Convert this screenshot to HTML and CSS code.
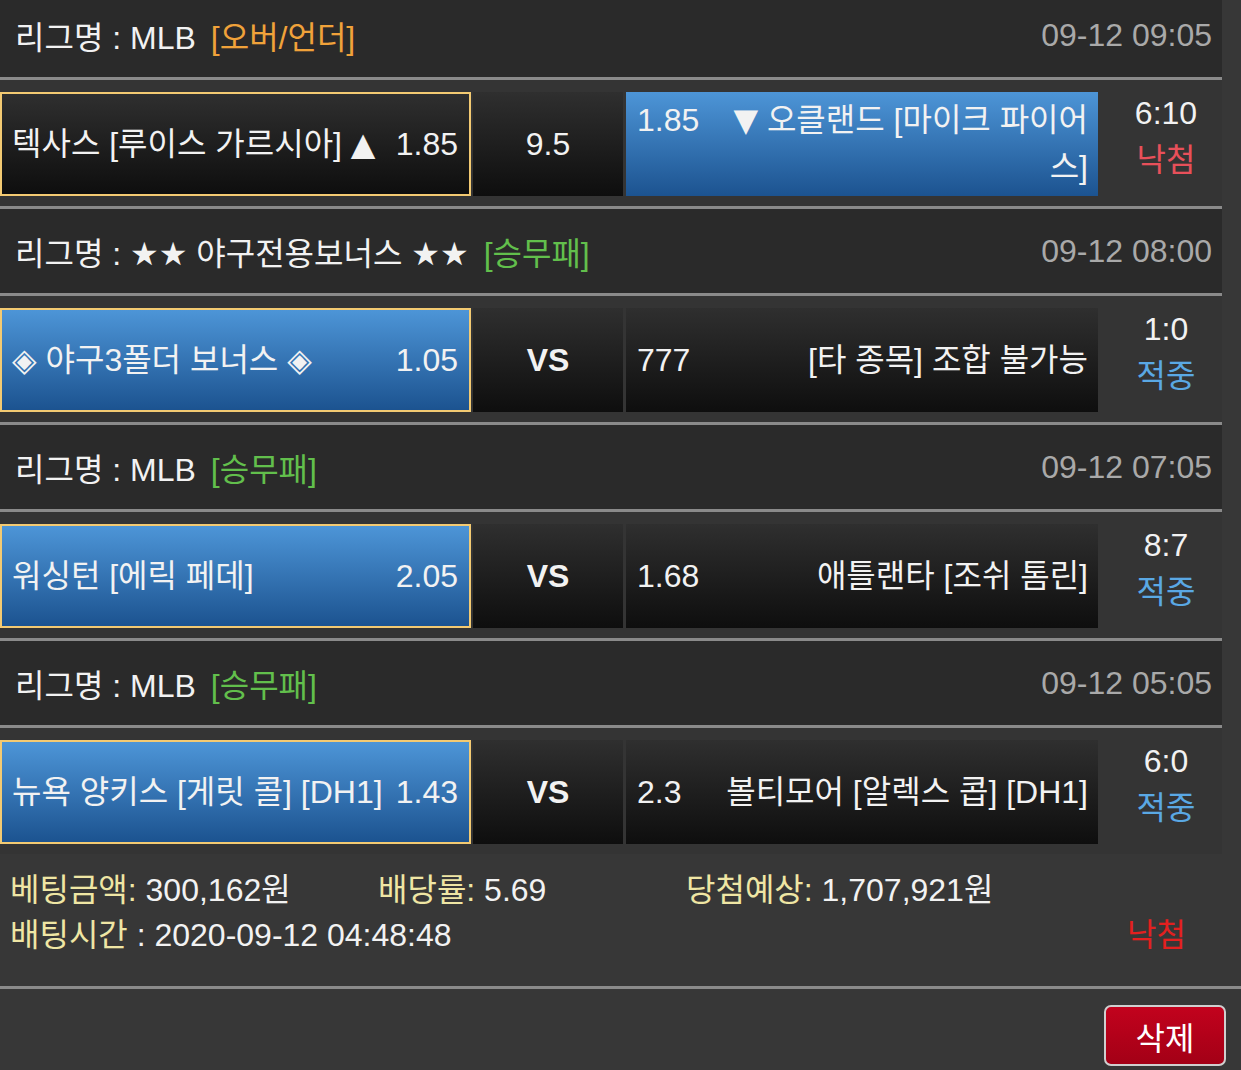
FILE: index.html
```html
<!DOCTYPE html>
<html lang="ko">
<head>
<meta charset="utf-8">
<title>배팅내역</title>
<link rel="stylesheet" href="styles.css">
</head>
<body>
<div class="slip">
  <div class="league"><span>리그명 : MLB</span><span class="tag orange">[오버/언더]</span><span class="date">09-12 09:05</span></div>
  <div class="match">
    <div class="pick home dark selected"><div class="row"><span class="team">텍사스 [루이스 가르시아] <span class="sym">▲</span></span><span class="odd">1.85</span></div></div>
    <div class="mid dark">9.5</div>
    <div class="pick away blue"><div class="row"><span class="odd">1.85</span><span class="team"><span class="sym">▼</span> 오클랜드 [마이크 파이어스]</span></div></div>
    <div class="result"><span>6:10</span><span class="lose">낙첨</span></div>
  </div>

  <div class="league"><span>리그명 : <span class="sym">★★</span> 야구전용보너스 <span class="sym">★★</span></span><span class="tag green">[승무패]</span><span class="date">09-12 08:00</span></div>
  <div class="match">
    <div class="pick home blue selected"><div class="row"><span class="team"><span class="sym">◈</span> 야구3폴더 보너스 <span class="sym">◈</span></span><span class="odd">1.05</span></div></div>
    <div class="mid dark vs">VS</div>
    <div class="pick away dark"><div class="row"><span class="odd">777</span><span class="team">[타 종목] 조합 불가능</span></div></div>
    <div class="result"><span>1:0</span><span class="win">적중</span></div>
  </div>

  <div class="league"><span>리그명 : MLB</span><span class="tag green">[승무패]</span><span class="date">09-12 07:05</span></div>
  <div class="match">
    <div class="pick home blue selected"><div class="row"><span class="team">워싱턴 [에릭 페데]</span><span class="odd">2.05</span></div></div>
    <div class="mid dark vs">VS</div>
    <div class="pick away dark"><div class="row"><span class="odd">1.68</span><span class="team">애틀랜타 [조쉬 톰린]</span></div></div>
    <div class="result"><span>8:7</span><span class="win">적중</span></div>
  </div>

  <div class="league"><span>리그명 : MLB</span><span class="tag green">[승무패]</span><span class="date">09-12 05:05</span></div>
  <div class="match last">
    <div class="pick home blue selected"><div class="row"><span class="team">뉴욕 양키스 [게릿 콜] [DH1]</span><span class="odd">1.43</span></div></div>
    <div class="mid dark vs">VS</div>
    <div class="pick away dark"><div class="row"><span class="odd">2.3</span><span class="team">볼티모어 [알렉스 콥] [DH1]</span></div></div>
    <div class="result"><span>6:0</span><span class="win">적중</span></div>
  </div>
</div>

<div class="summary">
  <div><span class="label">베팅금액:</span> 300,162원</div>
  <div><span class="label">배당률:</span> 5.69</div>
  <div><span class="label">당첨예상:</span> 1,707,921원</div>
  <div class="span2"><span class="label">배팅시간</span> : 2020-09-12 04:48:48</div>
  <div class="status-lose">낙첨</div>
</div>

<div class="actions">
  <button class="delete" type="button">삭제</button>
</div>
</body>
</html>
```

FILE: styles.css
```css
html, body {
  margin: 0;
  padding: 0;
}
body {
  width: 1241px;
  height: 1070px;
  overflow: hidden;
  background: #373737;
  color: #f2f2f2;
  font-family: "Liberation Sans", Arial, "Noto Sans CJK KR", sans-serif;
  font-size: 32px;
}
.sym {
  font-family: "DejaVu Sans", sans-serif;
}
.slip {
  width: 1222px;
  margin-top: -7px;
}
.league {
  height: 84px;
  display: flex;
  align-items: center;
  padding: 0 10px 0 15px;
  background: #2a2a2a;
  border-bottom: 3px solid #8a8a8a;
  white-space: nowrap;
}
.tag {
  margin-left: 15px;
}
.orange { color: #f0a23a; }
.green { color: #62bf4c; }
.date {
  margin-left: auto;
  color: #a9a9a9;
}
.match {
  display: flex;
  height: 104px;
  padding: 12px 0 10px;
  background: #343434;
  border-bottom: 3px solid #8a8a8a;
}
.match.last {
  border-bottom: none;
}
.dark {
  background: linear-gradient(#2f2f2f, #0e0e0e);
}
.blue {
  background: linear-gradient(#4d95d7, #1c5390);
}
.pick {
  height: 104px;
  box-sizing: border-box;
  display: flex;
  align-items: center;
  line-height: 47px;
}
.row {
  flex: 1;
  display: flex;
  align-items: baseline;
}
.home {
  width: 471px;
  padding: 0 11px 0 10px;
}
.home .odd {
  margin-left: auto;
  white-space: nowrap;
}
.selected {
  border: 2px solid #f3ca72;
}
.mid {
  width: 150px;
  height: 104px;
  margin: 0 3px 0 2px;
  display: flex;
  align-items: center;
  justify-content: center;
}
.vs {
  font-weight: bold;
}
.away {
  width: 472px;
  padding: 0 10px 0 11px;
}
.away .odd {
  white-space: nowrap;
}
.away .team {
  flex: 1;
  text-align: right;
  margin-left: 20px;
}
.result {
  width: 124px;
  height: 104px;
  box-sizing: border-box;
  display: flex;
  flex-direction: column;
  align-items: center;
  justify-content: center;
  line-height: 47px;
  padding: 0 0 14px 12px;
}
.lose { color: #e8505a; }
.win { color: #5aa8e4; }

.summary {
  height: 118px;
  padding: 14px 0 0 10px;
  display: grid;
  grid-template-columns: 368px 308px 1fr;
  grid-auto-rows: 45px;
  line-height: 45px;
  border-bottom: 3px solid #8a8a8a;
}
.label {
  color: #efe6a4;
}
.span2 {
  grid-column: span 2;
}
.status-lose {
  justify-self: end;
  margin-right: 55px;
  color: #e3201f;
}
.actions {
  display: flex;
  justify-content: flex-end;
  padding: 16px 15px 0 0;
}
.delete {
  width: 122px;
  height: 61px;
  border: 2px solid #cfcfcf;
  border-radius: 7px;
  background: linear-gradient(#c2021d, #a30016);
  color: #fff;
  font-family: "Liberation Sans", Arial, "Noto Sans CJK KR", sans-serif;
  font-size: 32px;
  padding: 0;
}
```
